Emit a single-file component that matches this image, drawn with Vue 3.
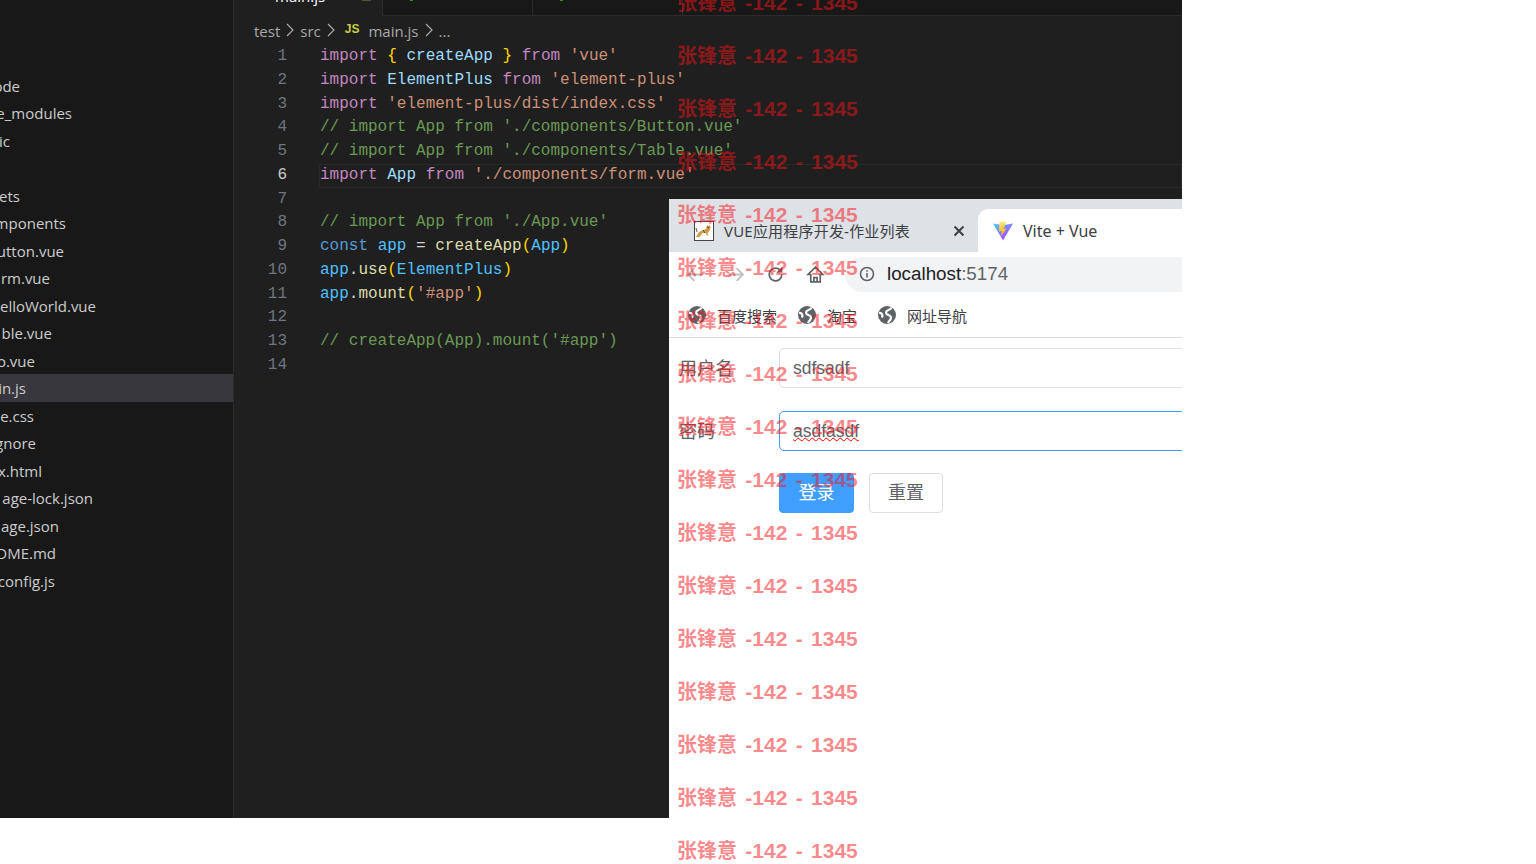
<script setup>
const sideRows = [
  { t: 'ode', end: 20 },
  { t: 'e_modules', end: 72 },
  { t: 'ic', end: 10 },
  { t: '', end: 10 },
  { t: 'ets', end: 20 },
  { t: 'mponents', end: 66 },
  { t: 'utton.vue', end: 64 },
  { t: 'rm.vue', end: 50 },
  { t: 'elloWorld.vue', end: 96 },
  { t: 'ble.vue', end: 52 },
  { t: 'o.vue', end: 35 },
  { t: 'in.js', end: 26 },
  { t: 'e.css', end: 34 },
  { t: 'gnore', end: 36 },
  { t: 'x.html', end: 42 },
  { t: 'age-lock.json', end: 93 },
  { t: 'age.json', end: 59 },
  { t: 'DME.md', end: 56 },
  { t: 'config.js', end: 55 },
]

const k = (t) => ({ t, c: 'kw' })
const v = (t) => ({ t, c: 'var' })
const s = (t) => ({ t, c: 'str' })
const p = (t) => ({ t, c: 'pun' })
const b = (t) => ({ t, c: 'brk' })
const n = (t) => ({ t, c: 'cst' })
const f = (t) => ({ t, c: 'fn' })
const g = (t) => ({ t, c: 'com' })

const lines = [
  [k('import'), p(' '), b('{'), p(' '), v('createApp'), p(' '), b('}'), p(' '), k('from'), p(' '), s("'vue'")],
  [k('import'), p(' '), v('ElementPlus'), p(' '), k('from'), p(' '), s("'element-plus'")],
  [k('import'), p(' '), s("'element-plus/dist/index.css'")],
  [g("// import App from './components/Button.vue'")],
  [g("// import App from './components/Table.vue'")],
  [k('import'), p(' '), v('App'), p(' '), k('from'), p(' '), s("'./components/form.vue'")],
  [],
  [g("// import App from './App.vue'")],
  [{ t: 'const', c: 'dec' }, p(' '), n('app'), p(' = '), f('createApp'), b('('), n('App'), b(')')],
  [n('app'), p('.'), f('use'), b('('), n('ElementPlus'), b(')')],
  [n('app'), p('.'), f('mount'), b('('), s("'#app'"), b(')')],
  [],
  [g("// createApp(App).mount('#app')")],
  [],
]

const marks = Array.from({ length: 17 }, (_, i) => i)
const bookmarks = ['百度搜索', '淘宝', '网址导航']
</script>

<template>
  <div class="screen">
    <div class="desktop">
      <aside class="sidebar">
        <div
          v-for="(row, i) in sideRows"
          :key="i"
          class="side-row"
          :class="{ selected: row.t === 'in.js' }"
        >
          <div class="side-clip" :style="{ width: row.end + 'px' }"><span>{{ row.t }}</span></div>
        </div>
      </aside>

      <main class="editor">
        <div class="tabs">
          <div class="tab active"><span>main.js</span><i class="dot mod"></i></div>
          <div class="tab"><i class="dot"></i><span>Table.vue</span></div>
          <div class="tab"><i class="dot"></i><span>form.vue</span></div>
          <div class="tab-fill"></div>
        </div>
        <div class="crumbs">
          <span>test</span>
          <svg class="chev" viewBox="0 0 8 14"><path d="M1 1l6 6-6 6" /></svg>
          <span>src</span>
          <svg class="chev" viewBox="0 0 8 14"><path d="M1 1l6 6-6 6" /></svg>
          <span class="js">JS</span>
          <span>main.js</span>
          <svg class="chev" viewBox="0 0 8 14"><path d="M1 1l6 6-6 6" /></svg>
          <span>...</span>
        </div>
        <div class="code">
          <div
            v-for="(line, i) in lines"
            :key="i"
            class="line"
            :class="{ current: i === 5 }"
          >
            <span class="num">{{ i + 1 }}</span>
            <span class="src"><span
              v-for="(tok, j) in line"
              :key="j"
              :class="tok.c"
            >{{ tok.t }}</span></span>
          </div>
        </div>
      </main>

      <section class="browser">
        <div class="strip">
          <div class="btab inactive">
            <svg class="cat" viewBox="0 0 20 20">
              <rect x="0.5" y="0.5" width="19" height="19" fill="#fff" stroke="#444" />
              <path d="M2 16l3-5 4-2 3-1 1-4 1.500 1 1.500-1 .5 3-1 3-2 2 1 3-2-1-1-2-3 0-3 4z" fill="#cf9d4a" />
              <path d="M13 6l1 1 1.500-1M3 11L2 7M9 9l2 3" stroke="#5e4219" stroke-width="0.900" fill="none" />
            </svg>
            <span class="btitle wide">VUE应用程序开发-作业列表</span>
            <svg class="close" viewBox="0 0 12 12"><path d="M1.5 1.5l9 9M10.5 1.5l-9 9" /></svg>
          </div>
          <div class="btab current">
            <svg class="vite" viewBox="0 0 20 20">
              <defs>
                <linearGradient id="viteA" x1="0" y1="0" x2="0.8" y2="1">
                  <stop offset="0" stop-color="#41d1ff" />
                  <stop offset="1" stop-color="#bd34fe" />
                </linearGradient>
                <linearGradient id="viteB" x1="0" y1="0" x2="0" y2="1">
                  <stop offset="0" stop-color="#ffea83" />
                  <stop offset="1" stop-color="#ffa800" />
                </linearGradient>
              </defs>
              <path d="M0 2.500l6 1 4 .5 4-.5 6-1L10 19.500z" fill="url(#viteA)" />
              <path d="M13.500 0L6.500 1.300 6 10.500l2.800-.6-.8 5.500 5.500-8-3 .5z" fill="url(#viteB)" />
            </svg>
            <span class="btitle vite-title">Vite + Vue</span>
          </div>
        </div>

        <div class="toolbar">
          <div class="nav">
            <svg class="nav-ico faded" viewBox="0 0 18 18"><path d="M16 9H2M8 3L2 9l6 6" /></svg>
            <svg class="nav-ico faded" viewBox="0 0 18 18"><path d="M2 9h14M10 3l6 6-6 6" /></svg>
            <svg class="nav-ico" viewBox="0 0 18 18"><path d="M15 9a6 6 0 1 1-2-4.500" /><path class="fill" d="M15.500 1.500v5.500H10z" /></svg>
            <svg class="nav-ico" viewBox="0 0 18 18"><path d="M9 2L2 9h2.500v7h9V9H16zM7.500 16v-4h3v4" /></svg>
          </div>
          <div class="omni">
            <svg class="info" viewBox="0 0 16 16">
              <circle cx="8" cy="8" r="6.500" />
              <path d="M8 7v4.500M8 4.300v1.400" />
            </svg>
            <span class="host">localhost</span><span class="port">:5174</span>
          </div>
        </div>

        <div class="bookmarks">
          <div v-for="mark in bookmarks" :key="mark" class="bookmark">
            <svg class="globe" viewBox="0 0 18 18">
              <circle cx="9" cy="9" r="9" fill="#5f6368" />
              <path d="M13.500 1.500c-1 3-5.500 2-5.500 5s5 2 5 5-2 3-3 5.500M1 7c3-.5 4 2 3 4.500" fill="none" stroke="#fff" stroke-width="2.200" />
            </svg>
            <span>{{ mark }}</span>
          </div>
        </div>

        <form class="form" @submit.prevent>
          <div class="form-row">
            <label class="label">用户名</label>
            <div class="input">sdfsadf</div>
          </div>
          <div class="form-row tight">
            <label class="label">密码</label>
            <div class="input focus"><span class="misspelled">asdfasdf</span></div>
          </div>
          <div class="actions">
            <button class="btn primary" type="button">登录</button>
            <button class="btn" type="button">重置</button>
          </div>
        </form>
      </section>
    </div>

    <div class="watermarks">
      <div v-for="m in marks" :key="m" class="mark"><span class="mark-name">张锋意</span> -142 - 1345</div>
    </div>
  </div>
</template>

<style scoped>
.screen {
  position: relative;
  width: 1536px;
  height: 864px;
  overflow: hidden;
  background: #fff;
}
.desktop {
  position: relative;
  display: flex;
  width: 1182px;
  height: 818px;
  background: #1f1f1f;
  overflow: hidden;
}
.sidebar {
  flex: 0 0 234px;
  box-sizing: border-box;
  padding-top: 71.5px;
  background: #181818;
  border-right: 1px solid #2b2b2b;
}
.side-row {
  height: 27.5px;
  font: 15px/27.500px "Open Sans", "Noto Sans", sans-serif;
  color: #cccccc;
  white-space: nowrap;
}
.side-row.selected {
  background: #37373d;
}
.side-clip {
  display: flex;
  justify-content: flex-end;
  overflow: hidden;
  padding-top: 1px;
}
.side-clip span {
  flex: none;
}
.editor {
  flex: 1;
  min-width: 0;
  display: flex;
  flex-direction: column;
}
.tabs {
  display: flex;
  height: 16px;
  background: #181818;
  border-bottom: 1px solid #2b2b2b;
  box-sizing: border-box;
}
.tab {
  display: flex;
  align-items: flex-start;
  box-sizing: border-box;
  width: 150px;
  border-right: 1px solid #2b2b2b;
  padding-left: 27px;
  overflow: hidden;
  font: 15px/15px "Open Sans", "Noto Sans", sans-serif;
  color: #9d9d9d;
}
.tab span {
  margin-top: -13px;
}
.dot {
  flex: none;
  width: 3px;
  height: 1px;
  margin-right: 14px;
  background: #3d8b2f;
}
.tab.active {
  width: 149px;
  padding-left: 41px;
  background: #1f1f1f;
  color: #fff;
  margin-bottom: -1px;
}
.tab.active span {
  margin-top: -11px;
}
.dot.mod {
  width: 9px;
  margin: 0 0 0 37px;
  background: #5d5033;
}
.tab-fill {
  flex: 1;
}
.crumbs {
  display: flex;
  align-items: center;
  height: 30px;
  padding-left: 20px;
  font: 15px/30px "Open Sans", "Noto Sans", sans-serif;
  color: #a9a9a9;
}
.chev {
  width: 8px;
  height: 14px;
  margin: -2px 6px 0 6px;
  fill: none;
  stroke: #a9a9a9;
  stroke-width: 1.200;
}
.js {
  font: bold 12px/30px "Liberation Sans", sans-serif;
  color: #cbcb41;
  margin: -4px 9px 0 4px;
}
.code {
  margin-top: -1px;
  font: 16px/23.770px "Liberation Mono", "DejaVu Sans Mono", monospace;
}
.line {
  display: flex;
  height: 23.770px;
  white-space: pre;
}
.num {
  flex: 0 0 53px;
  text-align: right;
  color: #6e7681;
}
.src {
  flex: 1;
  margin-left: 32px;
  padding-left: 1px;
}
.line.current .num {
  color: #cccccc;
}
.line.current .src {
  box-shadow: inset 0 0 0 1px #2a2a2a;
}
.kw { color: #c586c0; }
.var { color: #9cdcfe; }
.str { color: #ce9178; }
.pun { color: #d4d4d4; }
.brk { color: #ffd700; }
.cst { color: #4fc1ff; }
.dec { color: #569cd6; }
.fn { color: #dcdcaa; }
.com { color: #6a9955; }

.browser {
  position: absolute;
  left: 669px;
  top: 199px;
  width: 513px;
  height: 619px;
  background: #fff;
  overflow: hidden;
  font-family: "Liberation Sans", "Noto Sans CJK SC", sans-serif;
  color: #303133;
}
.strip {
  display: flex;
  align-items: flex-end;
  height: 53px;
  background: #dee1e6;
}
.btab {
  display: flex;
  align-items: center;
  box-sizing: border-box;
  height: 43px;
  font: 15px "Noto Sans", "Noto Sans CJK SC", sans-serif;
  color: #3c4043;
}
.btab.inactive {
  width: 309px;
  padding-left: 25px;
}
.btab.current {
  flex: 1;
  padding-left: 15px;
  background: #fff;
  border-radius: 10px 0 0 0;
}
.btitle {
  white-space: nowrap;
}
.btitle.wide {
  letter-spacing: 0.2px;
}
.btitle.vite-title {
  font-size: 16px;
}
.cat {
  width: 20px;
  height: 20px;
  margin-right: 10px;
}
.close {
  width: 12px;
  height: 12px;
  margin-left: auto;
  margin-right: 13px;
  fill: none;
  stroke: #3c4043;
  stroke-width: 2;
}
.vite {
  width: 20px;
  height: 20px;
  margin-right: 10px;
}
.toolbar {
  display: flex;
  align-items: center;
  height: 44px;
}
.nav {
  display: flex;
  flex: 0 0 176px;
  box-sizing: border-box;
  padding-left: 17px;
  gap: 21px;
}
.nav-ico {
  width: 19px;
  height: 19px;
  fill: none;
  stroke: #5f6368;
  stroke-width: 1.600;
}
.nav-ico.faded {
  stroke: #bfc1c4;
  stroke-width: 1.800;
}
.nav-ico .fill {
  fill: #5f6368;
  stroke: none;
}
.omni {
  flex: 1;
  display: flex;
  align-items: center;
  height: 35px;
  padding-left: 14px;
  background: #f1f3f4;
  border-radius: 18px 0 0 18px;
  font-size: 18.800px;
}
.info {
  width: 16px;
  height: 16px;
  margin-right: 12px;
  fill: none;
  stroke: #5f6368;
  stroke-width: 1.600;
}
.host {
  color: #202124;
}
.port {
  color: #5f6368;
}
.bookmarks {
  display: flex;
  align-items: center;
  height: 38px;
  padding: 0 0 3px 19px;
  border-bottom: 1px solid #dadce0;
  font: 15px "Noto Sans CJK SC", sans-serif;
  color: #3c4043;
  gap: 21px;
}
.bookmark {
  display: flex;
  align-items: center;
  gap: 11px;
}
.globe {
  width: 18px;
  height: 18px;
}
.form {
  padding: 10px 0 0 10px;
}
.form-row {
  display: flex;
  align-items: center;
  height: 40px;
  margin-bottom: 23px;
}
.form-row.tight {
  margin-bottom: 22px;
}
.label {
  flex: 0 0 100px;
  padding-bottom: 3px;
  font: 18px "Noto Sans CJK SC", sans-serif;
  color: #606266;
}
.input {
  flex: 1;
  box-sizing: border-box;
  height: 40px;
  margin-right: -6px;
  padding-left: 13px;
  border: 1px solid #dcdfe6;
  border-radius: 5px;
  font: 17.500px/39px "Liberation Sans", sans-serif;
  color: #606266;
}
.input.focus {
  border-color: #409eff;
}
.misspelled {
  text-decoration: underline wavy #f00 1px;
  text-underline-offset: 0;
}
.actions {
  display: flex;
  gap: 15px;
  padding-left: 100px;
}
.btn {
  width: 74px;
  height: 40px;
  padding: 0 0 5px;
  background: #fff;
  border: 1px solid #dcdfe6;
  border-radius: 4px;
  font: 18px "Noto Sans CJK SC", sans-serif;
  color: #606266;
}
.btn.primary {
  width: 75px;
  background: #409eff;
  border-color: #409eff;
  color: #fff;
}
.watermarks {
  position: absolute;
  left: 677px;
  top: -11px;
  pointer-events: none;
}
.mark {
  height: 53px;
  font: bold 21px/26px "Liberation Sans", "Noto Sans CJK SC", sans-serif;
  word-spacing: 2.500px;
  color: rgba(245, 20, 25, 0.5);
  white-space: pre;
}
.mark-name {
  font: bold 20px/26px "Noto Sans CJK SC", sans-serif;
}
</style>
